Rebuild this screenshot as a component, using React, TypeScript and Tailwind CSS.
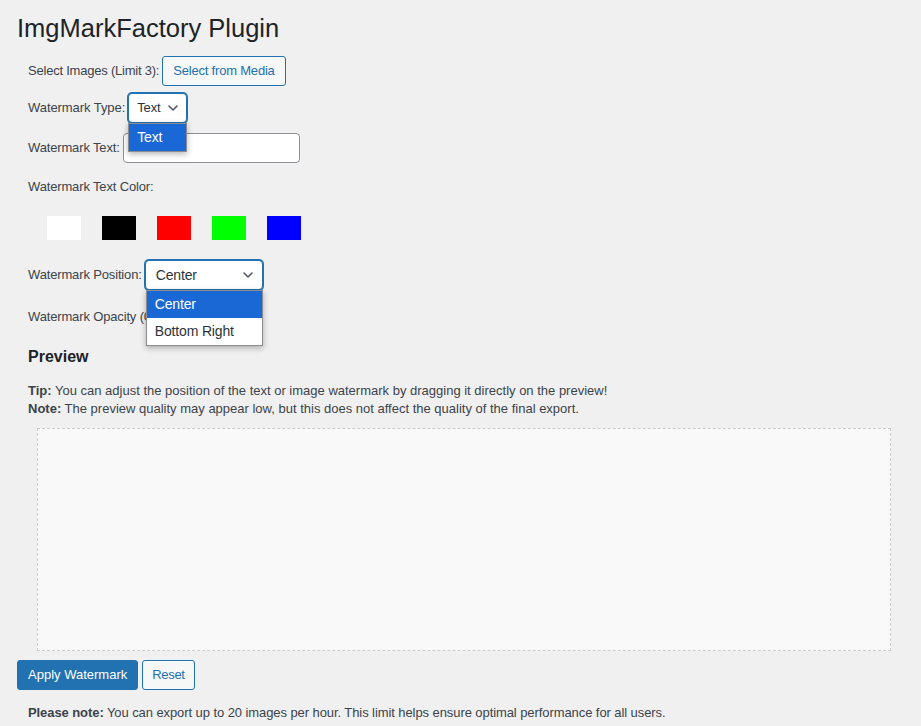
import React from "react";

const font = { fontFamily: '"Liberation Sans", Arial, sans-serif' };

function Chevron() {
  return (
    <svg width="10" height="6" viewBox="0 0 10 6" fill="none" className="shrink-0">
      <path d="M1 1l4 4 4-4" stroke="#50575e" strokeWidth="1.6" strokeLinecap="round" strokeLinejoin="round" />
    </svg>
  );
}

const swatches = ["#ffffff", "#000000", "#ff0000", "#00ff00", "#0000ff"];

export default function App() {
  return (
    <div
      className="min-h-screen bg-[#f0f0f1] pl-[17px] pr-[30px] pt-[13px] text-[13px] text-[#3c434a]"
      style={font}
    >
      <h1 className="text-[25.5px] leading-[30px] font-normal text-[#1d2327]">ImgMarkFactory Plugin</h1>

      <div className="pl-[11px] tracking-[-0.15px]">
        {/* images */}
        <div className="mt-[13px] flex h-[30px] items-center">
          <span className="tracking-[-0.22px]">Select Images (Limit 3):</span>
          <button className="ml-[3px] h-[30px] rounded-[3px] border border-[#2271b1] bg-[#f6f7f7] px-[10px] tracking-[-0.2px] text-[#2271b1]">
            Select from Media
          </button>
        </div>

        {/* type */}
        <div className="mt-[7px] flex h-[30px] items-center">
          <span className="tracking-[-0.07px]">Watermark Type:</span>
          <div className="relative ml-[3px]">
            <div className="flex h-[30px] w-[59px] items-center justify-between rounded-[4px] border border-[#2271b1] bg-white pl-[8px] pr-[8px] text-[#2c3338] shadow-[0_0_0_1px_#2271b1]">
              <span>Text</span>
              <Chevron />
            </div>
            <div className="absolute left-0 top-[30px] z-10 w-[59px] border border-[#8d8d8d] bg-white shadow-[0_2px_6px_rgba(0,0,0,0.3)]">
              <div className="flex h-[27px] items-center bg-[#1a68d6] px-[8px] text-[14px] text-white">Text</div>
            </div>
          </div>
        </div>

        {/* text */}
        <div className="mt-[10px] flex h-[30px] items-center">
          <span>Watermark Text:</span>
          <div className="ml-[3px] h-[30px] w-[177px] rounded-[4px] border border-[#8c8f94] bg-white" />
        </div>

        <div className="mt-[14px] leading-[20px]">Watermark Text Color:</div>

        <div className="mt-[19px] flex gap-[21px] pl-[19px]">
          {swatches.map((c) => (
            <div key={c} className="h-[24px] w-[34px]" style={{ backgroundColor: c }} />
          ))}
        </div>

        {/* position */}
        <div className="mt-[20px] flex h-[30px] items-center">
          <span>Watermark Position:</span>
          <div className="relative ml-[3px]">
            <div className="flex h-[30px] w-[118px] items-center justify-between rounded-[4px] border border-[#2271b1] bg-white pl-[10px] pr-[9px] text-[14px] text-[#2c3338] shadow-[0_0_0_1px_#2271b1]">
              <span>Center</span>
              <Chevron />
            </div>
            <div className="absolute left-[1px] top-[30px] z-10 w-[117px] border border-[#8d8d8d] bg-white text-[14px] text-[#2c3338] shadow-[0_2px_6px_rgba(0,0,0,0.3)]">
              <div className="flex h-[27px] items-center bg-[#1a68d6] px-[8px] text-white">Center</div>
              <div className="flex h-[27px] items-center px-[8px]">Bottom Right</div>
            </div>
          </div>
        </div>

        {/* opacity */}
        <div className="mt-[10px] flex h-[30px] items-center pt-[3px]">
          <span>Watermark Opacity (0-1):</span>
          <div className="ml-[3px] -mt-[3px] h-[30px] w-[80px] rounded-[4px] border border-[#8c8f94] bg-white" />
        </div>

        <h3 className="mt-[17px] text-[16px] font-semibold leading-[20px] tracking-normal text-[#1d2327]">Preview</h3>

        <p className="mt-[15px] leading-[18px] tracking-normal">
          <strong className="font-semibold">Tip:</strong> You can adjust the position of the text or image watermark by dragging it directly on the preview!
          <br />
          <strong className="font-semibold">Note:</strong> The preview quality may appear low, but this does not affect the quality of the final export.
        </p>

        <div className="ml-[9px] mt-[10px] h-[223px] border-[1.5px] border-dashed border-[#cccccc] bg-[#f9f9f9]" />
      </div>

      <div className="mt-[9px] flex gap-[4px]">
        <button className="h-[30px] rounded-[3px] border border-[#2271b1] bg-[#2271b1] px-[10px] text-white">Apply Watermark</button>
        <button className="h-[30px] rounded-[3px] border border-[#2271b1] bg-[#f6f7f7] px-[9px] tracking-[-0.3px] text-[#2271b1]">Reset</button>
      </div>

      <p className="mt-[14px] pl-[11px] leading-[18px] tracking-[-0.08px]">
        <strong className="font-semibold">Please note:</strong> You can export up to 20 images per hour. This limit helps ensure optimal performance for all users.
      </p>
    </div>
  );
}
